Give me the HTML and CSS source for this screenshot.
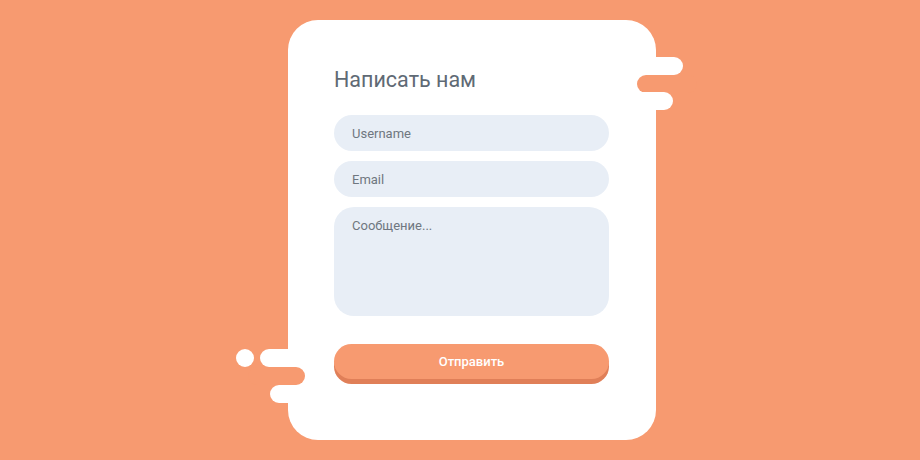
FILE: index.html
```html
<!DOCTYPE html>
<html lang="ru">
<head>
<meta charset="utf-8">
<title>Написать нам</title>
<link rel="stylesheet" href="styles.css">
</head>
<body>
<div class="card">
  <span class="blob r-top"></span>
  <span class="blob r-cut"></span>
  <span class="blob r-bottom"></span>
  <span class="blob l-dot"></span>
  <span class="blob l-top"></span>
  <span class="blob l-cut"></span>
  <span class="blob l-bottom"></span>
  <h1 class="title">Написать нам</h1>
  <form class="form">
    <input class="field" type="text" placeholder="Username">
    <input class="field" type="email" placeholder="Email">
    <textarea class="field area" placeholder="Сообщение..."></textarea>
    <button class="submit" type="button">Отправить</button>
  </form>
</div>
</body>
</html>
```

FILE: styles.css
```css
html, body {
  margin: 0;
  padding: 0;
}
body {
  width: 920px;
  height: 460px;
  background: #f79a70;
  font-family: Roboto, "Liberation Sans", sans-serif;
  display: flex;
  justify-content: center;
  align-items: flex-start;
  overflow: hidden;
}
.card {
  position: relative;
  box-sizing: border-box;
  width: 368px;
  height: 420px;
  margin: 20px 0 0 24px;
  background: #ffffff;
  border-radius: 30px;
  padding: 46px 47px 0 46px;
}
.blob {
  position: absolute;
  height: 18px;
  border-radius: 9px;
}
.r-top { background: #fff; top: 37px; left: 330px; width: 65px; }
.r-cut { background: #f79a70; top: 55px; left: 349px; width: 60px; }
.r-bottom { background: #fff; top: 72px; left: 330px; width: 55px; }
.l-dot { background: #fff; top: 329px; left: -52px; width: 18px; height: 18px; border-radius: 50%; }
.l-top { background: #fff; top: 329px; left: -28px; width: 50px; }
.l-cut { background: #f79a70; top: 347px; left: -40px; width: 57px; }
.l-bottom { background: #fff; top: 365px; left: -18px; width: 50px; }

.title {
  margin: 0;
  font-size: 21.5px;
  line-height: 28px;
  font-weight: 400;
  color: #5f6a75;
}
.form {
  margin-top: 21px;
  display: flex;
  flex-direction: column;
  gap: 10px;
}
.field {
  box-sizing: border-box;
  width: 275px;
  height: 36px;
  border: none;
  outline: none;
  border-radius: 18px;
  background: #e8eef6;
  padding: 0 18px;
  font-family: Roboto, "Liberation Sans", sans-serif;
  font-size: 13px;
  color: #5f6a75;
  margin: 0;
}
.field::placeholder {
  color: #6f7780;
  opacity: 1;
}
.area {
  height: 109px;
  border-radius: 20px;
  padding: 11px 18px;
  resize: none;
  line-height: 16px;
  display: block;
}
.submit {
  margin-top: 18px;
  width: 275px;
  height: 35px;
  border: none;
  border-radius: 18px;
  background: #f79a70;
  box-shadow: 0 5px 0 #e07f58;
  color: #ffffff;
  font-family: Roboto, "Liberation Sans", sans-serif;
  font-size: 13px;
  font-weight: 500;
  padding: 0;
  cursor: pointer;
}
```
